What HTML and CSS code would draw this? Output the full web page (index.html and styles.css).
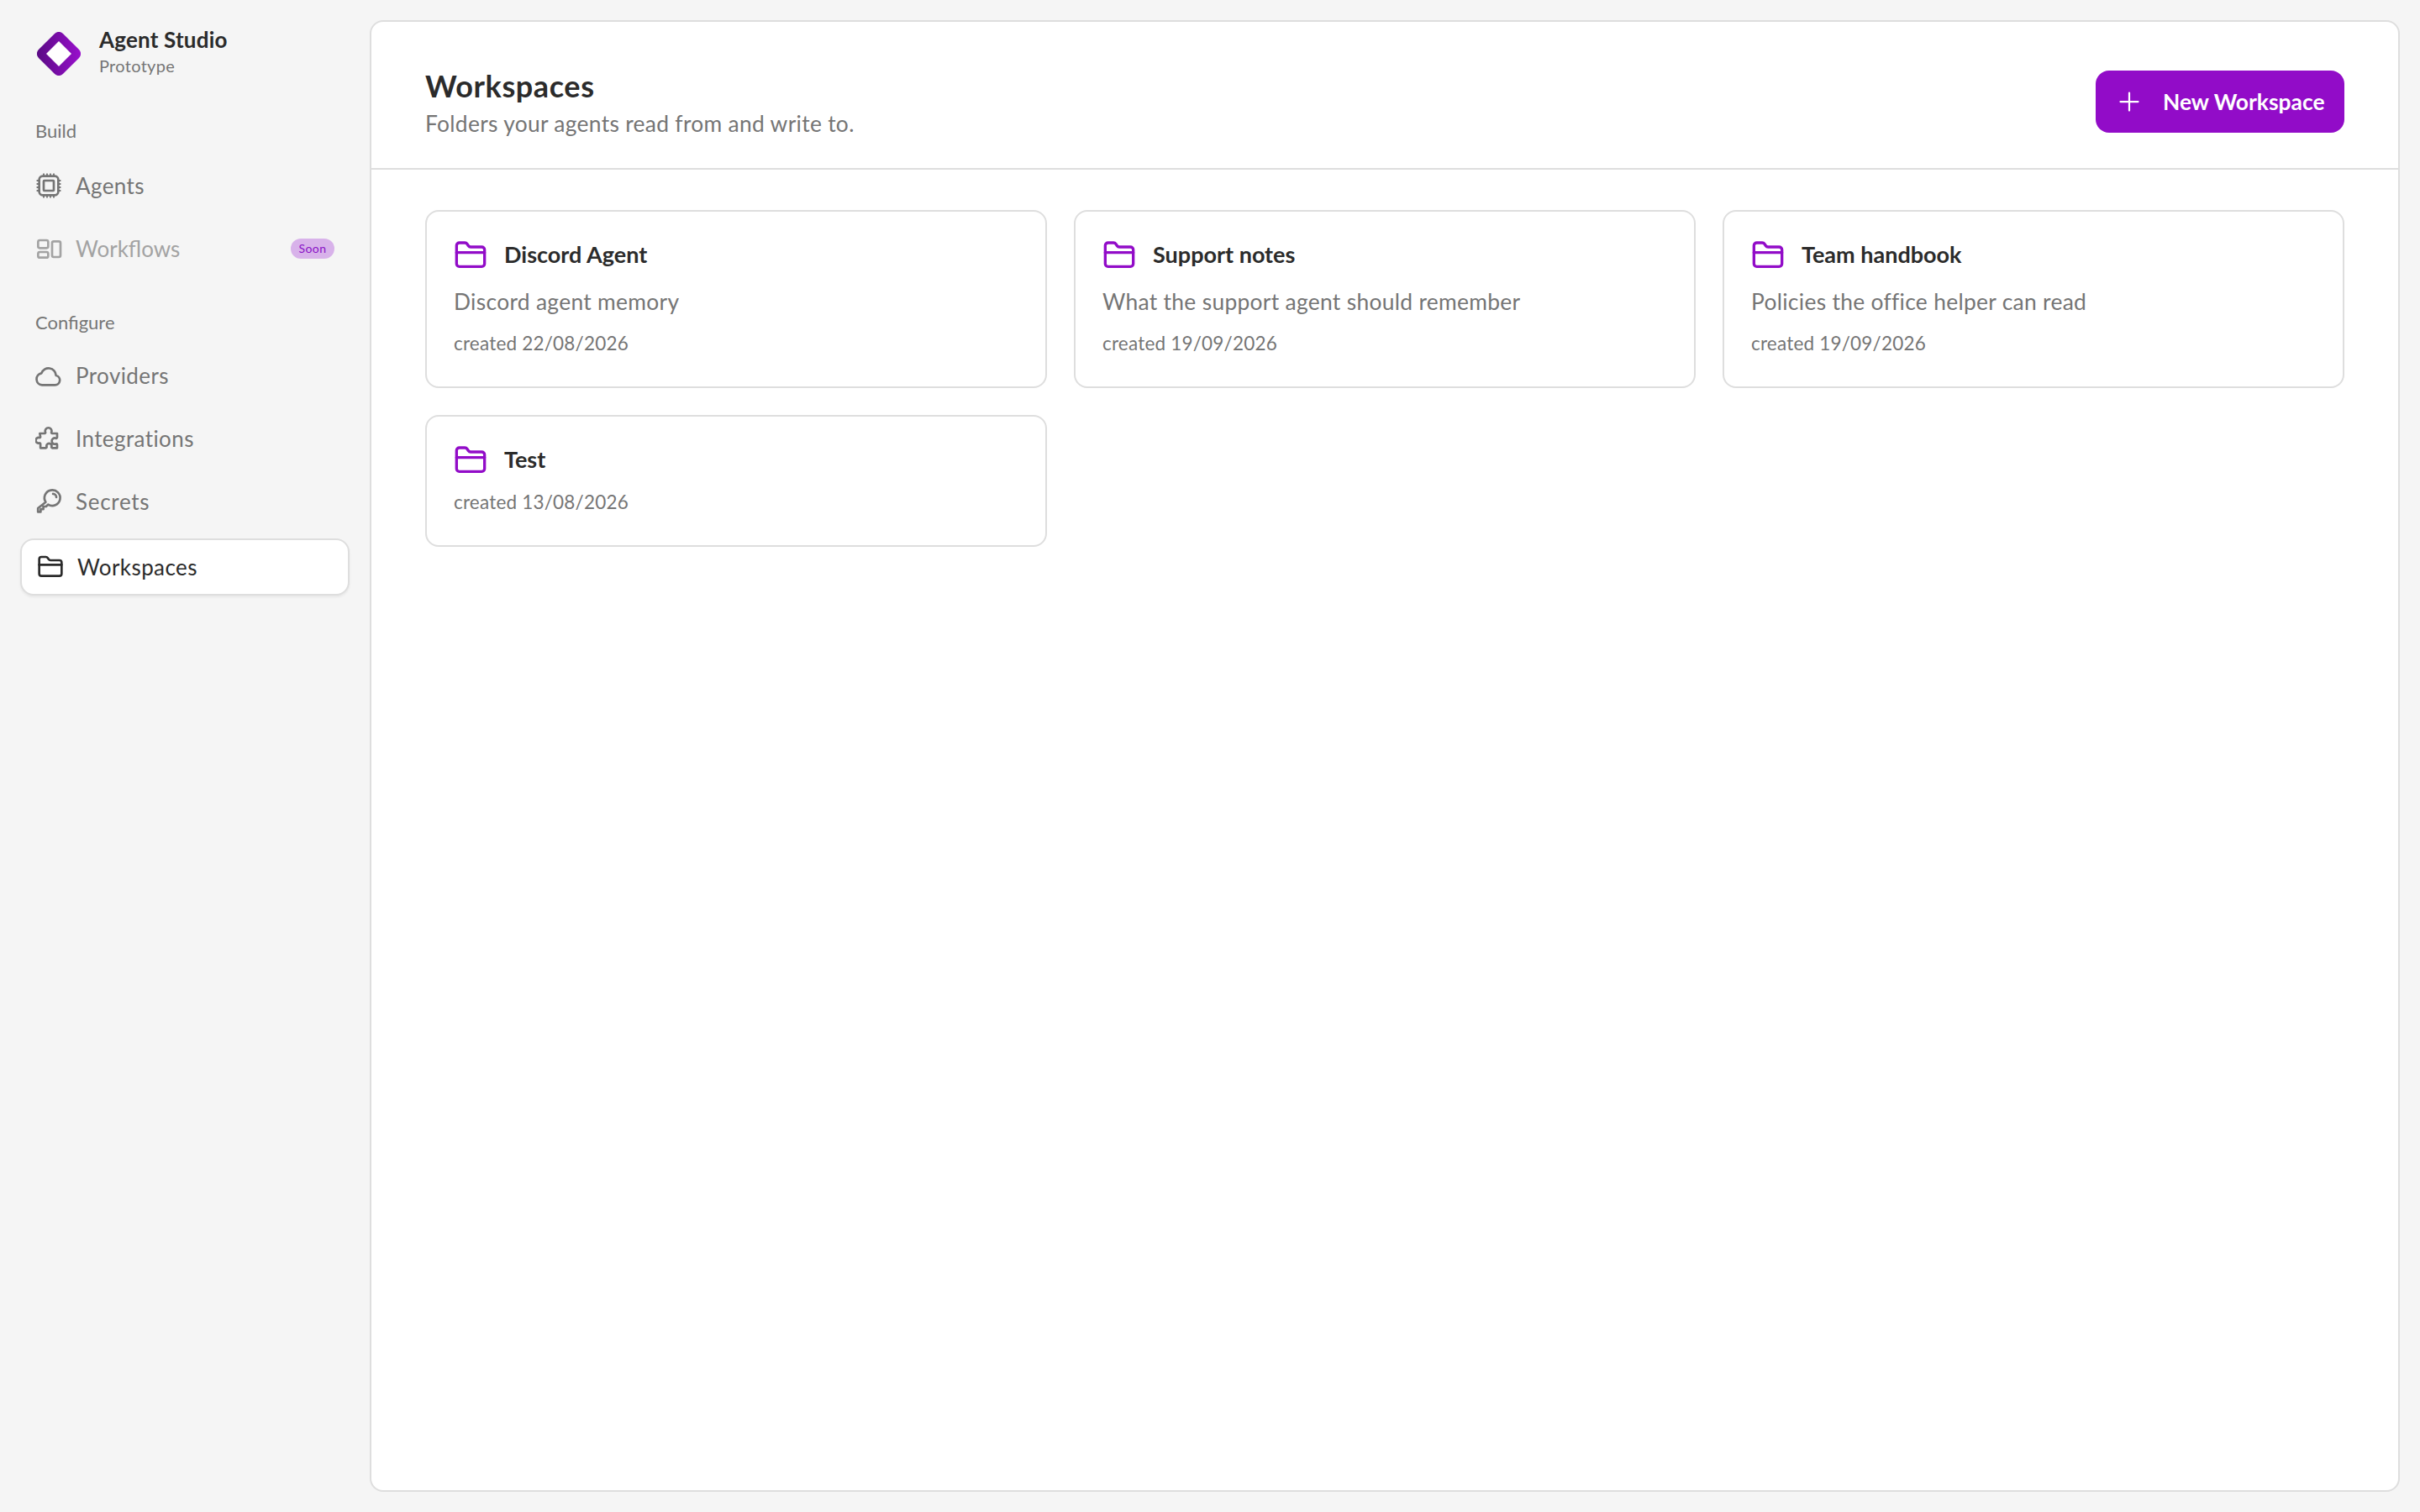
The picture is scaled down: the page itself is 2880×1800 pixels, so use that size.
FILE: index.html
```html
<!DOCTYPE html>
<html lang="en">
<head>
<meta charset="utf-8">
<title>Workspaces</title>
<link rel="stylesheet" href="styles.css">
</head>
<body>
<svg class="defs" width="0" height="0" aria-hidden="true">
  <defs>
    <linearGradient id="logo" x1="0" y1="1" x2="1" y2="0">
      <stop offset="0" stop-color="#560a80"/>
      <stop offset="1" stop-color="#9c10d0"/>
    </linearGradient>
    <symbol id="folder" viewBox="0 0 24 24">
      <path d="M20 20a2 2 0 0 0 2-2V8a2 2 0 0 0-2-2h-7.9a2 2 0 0 1-1.69-.9L9.6 3.9A2 2 0 0 0 7.93 3H4a2 2 0 0 0-2 2v13a2 2 0 0 0 2 2Z"/>
      <path d="M2 10h20"/>
    </symbol>
  </defs>
</svg>
<aside class="sidebar">
  <div class="brand">
    <svg class="brand-logo" viewBox="0 0 52 52">
      <rect x="5.5" y="5.5" width="41" height="41" rx="7" transform="rotate(45 26 26)" fill="url(#logo)"/>
      <polygon points="26,11 41,26 26,41 11,26" fill="#fff"/>
    </svg>
    <div class="brand-text">
      <div class="brand-name">Agent Studio</div>
      <div class="brand-sub">Prototype</div>
    </div>
  </div>
  <div class="nav-label nav-label-build">Build</div>
  <nav class="nav nav-build">
    <a class="nav-item">
      <svg class="nav-icon" viewBox="0 0 24 24">
        <rect x="3.5" y="3.5" width="17" height="17" rx="3"/>
        <rect x="7.5" y="7.5" width="9" height="9" rx="0.5"/>
        <path class="pins" d="M7.5 1.2v2M10.5 1.2v2M13.5 1.2v2M16.5 1.2v2M7.5 20.8v2M10.5 20.8v2M13.5 20.8v2M16.5 20.8v2M1.2 7.5h2M1.2 10.5h2M1.2 13.5h2M1.2 16.5h2M20.8 7.5h2M20.8 10.5h2M20.8 13.5h2M20.8 16.5h2"/>
      </svg>
      <span>Agents</span>
    </a>
    <a class="nav-item nav-item-disabled">
      <svg class="nav-icon" viewBox="0 0 24 24">
        <rect x="2.5" y="4.5" width="9" height="7" rx="1.5"/>
        <rect x="2.5" y="15" width="9" height="5" rx="1.5"/>
        <rect x="15" y="5.5" width="7.5" height="14" rx="1.5"/>
      </svg>
      <span class="nav-text-fill">Workflows</span>
      <span class="badge">Soon</span>
    </a>
  </nav>
  <div class="nav-label nav-label-config">Configure</div>
  <nav class="nav nav-config">
    <a class="nav-item">
      <svg class="nav-icon" viewBox="0 0 24 24">
        <path d="M6 20.5h11.5a4.3 4.3 0 0 0 1-8.5 6.7 6.7 0 0 0-13-2A5.3 5.3 0 0 0 6 20.5Z"/>
      </svg>
      <span>Providers</span>
    </a>
    <a class="nav-item">
      <svg class="nav-icon" viewBox="0 0 24 24">
        <path d="M4 7.5h4.3a.8.8 0 0 0 .7-1.1 2.9 2.9 0 1 1 5.4 0 .8.8 0 0 0 .7 1.1h4.4v3.6a.8.8 0 0 1-1.1.7 2.7 2.7 0 1 0 0 5 .8.8 0 0 1 1.1.7v3h-4.3a.8.8 0 0 1-.7-1.1 2.3 2.3 0 1 0-4.4 0 .8.8 0 0 1-.7 1.1H4.6v-3.7a.8.8 0 0 0-1-.7 2.5 2.5 0 1 1 0-4.8.8.8 0 0 0 1-.7Z"/>
      </svg>
      <span>Integrations</span>
    </a>
    <a class="nav-item">
      <svg class="nav-icon" viewBox="0 0 24 24">
        <path d="M9.3 12.6a7 7 0 1 1 2.1 2.1L9.6 16.5H7.2v2.4H4.8v2.4H2.4v-3.3Z"/>
        <path d="M15.8 5.2a3 3 0 0 1 3 3"/>
      </svg>
      <span class="nav-text-wide">Secrets</span>
    </a>
    <a class="nav-item nav-item-active">
      <svg class="nav-icon" viewBox="0 0 24 24"><use href="#folder"/></svg>
      <span>Workspaces</span>
    </a>
  </nav>
</aside>
<main class="panel">
  <header class="panel-head">
    <div class="panel-heading">
      <h1 class="panel-title">Workspaces</h1>
      <p class="panel-sub">Folders your agents read from and write to.</p>
    </div>
    <button class="btn-primary" type="button">
      <svg class="btn-icon" viewBox="0 0 24 24"><path d="M5 12h14M12 5v14"/></svg>
      <span>New Workspace</span>
    </button>
  </header>
  <section class="card-grid">
    <article class="card">
      <div class="card-head">
        <svg class="card-icon" viewBox="0 0 24 24"><use href="#folder"/></svg>
        <h2 class="card-title">Discord Agent</h2>
      </div>
      <p class="card-desc">Discord agent memory</p>
      <p class="card-date">created 22/08/2026</p>
    </article>
    <article class="card">
      <div class="card-head">
        <svg class="card-icon" viewBox="0 0 24 24"><use href="#folder"/></svg>
        <h2 class="card-title">Support notes</h2>
      </div>
      <p class="card-desc">What the support agent should remember</p>
      <p class="card-date">created 19/09/2026</p>
    </article>
    <article class="card">
      <div class="card-head">
        <svg class="card-icon" viewBox="0 0 24 24"><use href="#folder"/></svg>
        <h2 class="card-title">Team handbook</h2>
      </div>
      <p class="card-desc">Policies the office helper can read</p>
      <p class="card-date">created 19/09/2026</p>
    </article>
    <article class="card">
      <div class="card-head">
        <svg class="card-icon" viewBox="0 0 24 24"><use href="#folder"/></svg>
        <h2 class="card-title">Test</h2>
      </div>
      <p class="card-date card-date-tight">created 13/08/2026</p>
    </article>
  </section>
</main>
</body>
</html>
```
FILE: styles.css
```css
* { box-sizing: border-box; }
html, body { height: 100%; }
body {
  margin: 0;
  display: flex;
  height: 1800px;
  background: #f5f5f5;
  color: #2b2b2b;
  font-family: "Lato", "Noto Sans", sans-serif;
}
.defs { position: absolute; }
.sidebar {
  width: 440px;
  flex: none;
  padding: 0 24px;
  display: flex;
  flex-direction: column;
}
.brand {
  display: flex;
  align-items: center;
  gap: 22px;
  padding: 36px 0 0 20px;
  height: 92px;
}
.brand-logo { width: 52px; height: 52px; flex: none; }
.brand-text { padding-bottom: 6px; }
.brand-name { font-size: 26px; font-weight: 700; line-height: 34px; letter-spacing: 0.2px; color: #2b2b2b; }
.brand-sub { font-size: 20px; line-height: 29px; color: #757575; letter-spacing: 0.3px; }
.nav-label {
  font-size: 22px;
  line-height: 28px;
  color: #757575;
  padding-left: 18px;
}
.nav-label-build { margin-top: 50px; }
.nav-label-config { margin-top: 42px; }
.nav { display: flex; flex-direction: column; gap: 11px; }
.nav-build { margin-top: 19px; }
.nav-config { margin-top: 17px; }
.nav-item {
  display: flex;
  align-items: center;
  height: 64px;
  padding: 0 18px;
  gap: 16px;
  font-size: 26px;
  color: #757575;
  border-radius: 16px;
  letter-spacing: 0.4px;
}
.nav-icon {
  width: 32px;
  height: 32px;
  flex: none;
  fill: none;
  stroke: currentColor;
  stroke-width: 2;
  stroke-linecap: round;
  stroke-linejoin: round;
}
.pins { stroke-width: 1.4; stroke-linecap: butt; }
.nav-item-disabled { color: #a3a3a3; letter-spacing: 0; }
.nav-text-fill { flex: 1; }
.nav-text-wide { letter-spacing: 0.7px; }
.badge {
  height: 24px;
  width: 52px;
  border-radius: 12px;
  background: #d8b2ea;
  color: #8a12c6;
  font-size: 14px;
  line-height: 24px;
  text-align: center;
  letter-spacing: 0.4px;
}
.nav-item-active {
  height: 68px;
  margin-top: 1px;
  background: #fff;
  border: 2px solid #dedede;
  color: #2b2b2b;
  box-shadow: 0 2px 3px rgba(0, 0, 0, 0.06);
}
.panel {
  flex: 1;
  margin: 24px 24px 24px 0;
  background: #fff;
  border: 2px solid #dedede;
  border-radius: 16px;
  display: flex;
  flex-direction: column;
}
.panel-head {
  display: flex;
  align-items: center;
  justify-content: space-between;
  height: 176px;
  padding: 16px 64px 0;
  border-bottom: 2px solid #dedede;
}
.panel-heading { padding-top: 2px; }
.panel-title {
  margin: 0;
  font-size: 36px;
  line-height: 44px;
  font-weight: 700;
  letter-spacing: 0.6px;
  color: #2b2b2b;
}
.panel-sub {
  margin: 5px 0 0;
  font-size: 26.4px;
  line-height: 36px;
  color: #757575;
  letter-spacing: 0.3px;
}
.btn-primary {
  display: flex;
  align-items: center;
  gap: 22px;
  height: 74px;
  width: 296px;
  padding: 0 0 0 22px;
  border: 0;
  border-radius: 16px;
  background: #920cc8;
  color: #fff;
  font-family: inherit;
  font-size: 26.4px;
  font-weight: 700;
}
.btn-icon {
  width: 36px;
  height: 36px;
  fill: none;
  stroke: currentColor;
  stroke-width: 1.5;
  stroke-linecap: round;
}
.card-grid {
  display: grid;
  grid-template-columns: repeat(3, 1fr);
  gap: 32px;
  padding: 48px 64px;
  align-items: start;
}
.card {
  border: 2px solid #dedede;
  border-radius: 16px;
  padding: 30px 32px 36px;
}
.card-head { display: flex; align-items: center; gap: 20px; height: 44px; }
.card-icon {
  width: 40px;
  height: 40px;
  flex: none;
  fill: none;
  stroke: #920cc8;
  stroke-width: 2;
  stroke-linecap: round;
  stroke-linejoin: round;
}
.card-title { margin: 0 0 3px; font-size: 27px; font-weight: 700; color: #2b2b2b; }
.card-desc {
  margin: 14px 0 0;
  font-size: 26.4px;
  line-height: 38px;
  color: #757575;
  letter-spacing: 0.3px;
}
.card-date {
  margin: 16px 0 0;
  font-size: 22.5px;
  line-height: 30px;
  color: #757575;
  letter-spacing: 0.2px;
}
.card-date-tight { margin-top: 13px; }
```
